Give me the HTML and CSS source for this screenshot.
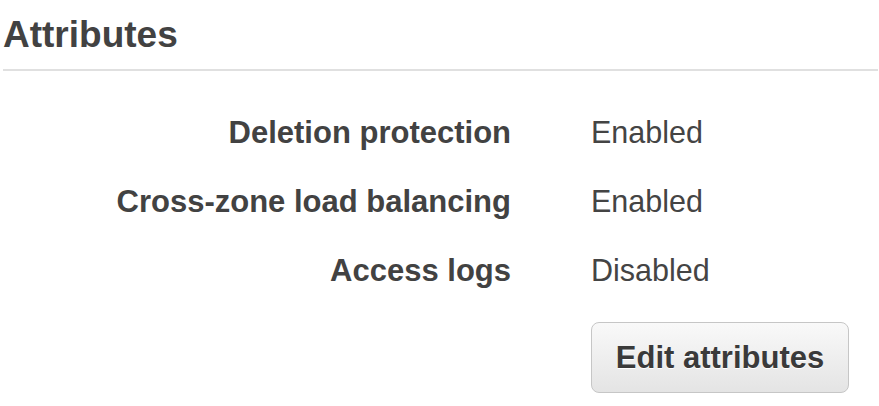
FILE: index.html
```html
<!DOCTYPE html>
<html>
<head>
<meta charset="utf-8">
<link rel="stylesheet" href="styles.css">
</head>
<body>
<div class="panel">
  <h2 class="title">Attributes</h2>
  <div class="attrs">
    <div class="label">Deletion protection</div>
    <div class="value">Enabled</div>
    <div class="label">Cross-zone load balancing</div>
    <div class="value">Enabled</div>
    <div class="label">Access logs</div>
    <div class="value">Disabled</div>
    <div class="spacer"></div>
    <div class="actions"><button class="btn">Edit attributes</button></div>
  </div>
</div>
</body>
</html>
```

FILE: styles.css
```css
html, body {
  margin: 0;
  padding: 0;
  background: #ffffff;
}
body {
  font-family: "Liberation Sans", Arial, Helvetica, sans-serif;
  color: #444444;
}
.panel {
  padding: 13px 1px 0 3px;
}
.title {
  margin: 0;
  font-size: 37px;
  line-height: 44px;
  font-weight: bold;
  color: #424242;
  padding-bottom: 12px;
  border-bottom: 2px solid #e0e0e0;
}
.attrs {
  display: grid;
  grid-template-columns: 508px auto;
  column-gap: 80px;
  margin-top: 27px;
  font-size: 30.5px;
  line-height: 69px;
}
.label {
  text-align: right;
  font-weight: bold;
  font-size: 31px;
  color: #424242;
}
.value {
  font-weight: normal;
}
.actions {
  padding-top: 17px;
}
.btn {
  box-sizing: border-box;
  width: 258px;
  height: 71px;
  border: 1px solid #c6c6c6;
  border-radius: 8px;
  background: linear-gradient(#f9f9f9, #e4e4e4);
  font-family: "Liberation Sans", Arial, Helvetica, sans-serif;
  font-size: 31px;
  font-weight: bold;
  color: #3a3a3a;
  text-shadow: 0 1px 0 #ffffff;
  line-height: 69px;
  padding: 0;
  margin: 0;
}
```
